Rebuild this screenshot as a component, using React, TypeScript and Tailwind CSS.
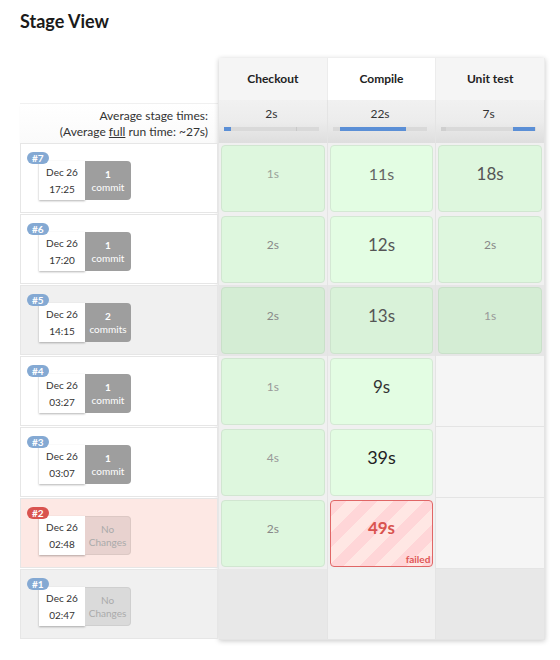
import React from 'react';

interface Stage {
  t: string;
  size: number;
  color: string;
  failed?: boolean;
}

interface Run {
  id: number;
  time: string;
  commits?: string;
  label?: string;
  stages: (Stage | null)[];
  shade?: boolean;
  failed?: boolean;
  empty?: boolean;
}

const runs: Run[] = [
  {
    id: 7, time: '17:25', commits: '1', label: 'commit',
    stages: [
      { t: '1s', size: 12, color: '#9aa39a' },
      { t: '11s', size: 16, color: '#666' },
      { t: '18s', size: 17, color: '#555' },
    ],
  },
  {
    id: 6, time: '17:20', commits: '1', label: 'commit',
    stages: [
      { t: '2s', size: 12, color: '#888' },
      { t: '12s', size: 17, color: '#555' },
      { t: '2s', size: 12, color: '#888' },
    ],
  },
  {
    id: 5, time: '14:15', commits: '2', label: 'commits', shade: true,
    stages: [
      { t: '2s', size: 12, color: '#888' },
      { t: '13s', size: 17, color: '#555' },
      { t: '1s', size: 12, color: '#999' },
    ],
  },
  {
    id: 4, time: '03:27', commits: '1', label: 'commit',
    stages: [
      { t: '1s', size: 12, color: '#999' },
      { t: '9s', size: 17, color: '#333' },
      null,
    ],
  },
  {
    id: 3, time: '03:07', commits: '1', label: 'commit',
    stages: [
      { t: '4s', size: 12, color: '#999' },
      { t: '39s', size: 18, color: '#222' },
      null,
    ],
  },
  {
    id: 2, time: '02:48', failed: true,
    stages: [
      { t: '2s', size: 12, color: '#888' },
      { t: '49s', size: 17, color: '#d9534f', failed: true },
      null,
    ],
  },
  { id: 1, time: '02:47', empty: true, stages: [null, null, null] },
];

const stageNames = ['Checkout', 'Compile', 'Unit test'];
const averages = [
  { t: '2s', offset: 0, width: 7, tick: 72 },
  { t: '22s', offset: 7, width: 66, tick: 0 },
  { t: '7s', offset: 72, width: 22, tick: 5 },
];

const RunCell = ({ run }: { run: Run }) => {
  const rowBg = run.failed ? 'bg-[#fde8e4]' : run.shade || run.empty ? 'bg-[#f0f0f0]' : 'bg-white';
  const badgeBg = run.failed ? 'bg-[#d9534f]' : 'bg-[#84a9d3]';
  return (
    <div className={`relative h-[70px] mb-[1px] border border-[#e6e6e6] ${rowBg}`}>
      <span className={`absolute left-[6px] top-[8px] z-10 rounded-full px-[5px] text-[10px] leading-[12px] font-bold text-white ${badgeBg}`}>
        #{run.id}
      </span>
      <div className="flex pl-[18px] pt-[17px]">
        <div className="flex h-[39px] w-[46px] flex-col items-center justify-center gap-[5px] bg-white text-[10px] leading-[12px] text-[#333] shadow-[0_1px_2px_rgba(0,0,0,0.3)]">
          <span>Dec 26</span>
          <span>{run.time}</span>
        </div>
        {run.commits ? (
          <div className="flex h-[39px] w-[46px] flex-col items-center justify-center rounded-r-[4px] bg-[#9e9e9e] text-[10px] leading-[13px] text-white">
            <span className="font-bold">{run.commits}</span>
            <span>{run.label}</span>
          </div>
        ) : (
          <div
            className={`flex h-[39px] w-[46px] flex-col items-center justify-center rounded-r-[4px] border border-l-0 text-[10px] leading-[13px] text-[#aaa] ${
              run.failed ? 'border-[#dcc8c4] bg-[#e8d2cf]' : 'border-[#cfcfcf] bg-[#dadada]'
            }`}
          >
            <span>No</span>
            <span>Changes</span>
          </div>
        )}
      </div>
    </div>
  );
};

const StageCell = ({ stage, col, run }: { stage: Stage | null; col: number; run: Run }) => {
  const mid = col === 1;
  if (!stage) {
    const bg = run.empty ? (mid ? 'bg-[#f1f1f1]' : 'bg-[#e8e8e8]') : 'bg-[#f5f5f5]';
    return <div className={`h-[71px] border-b border-r border-[#e4e4e4] ${bg}`} />;
  }
  if (stage.failed) {
    return (
      <div className="h-[71px] border-r border-[#e4e4e4] bg-[#f0f0f0] p-[2px]">
        <div className="relative flex h-full items-center justify-center rounded-[4px] border border-[#e06666] bg-[repeating-linear-gradient(135deg,#ffd6d8_0px,#ffd6d8_11px,#ffe7e4_11px,#ffe7e4_22px)] pb-[12px]">
          <span className="font-bold" style={{ fontSize: stage.size, color: stage.color }}>
            {stage.t}
          </span>
          <span className="absolute bottom-[1px] right-[2px] text-[10px] font-bold leading-[12px] text-[#e05555]">failed</span>
        </div>
      </div>
    );
  }
  const box = run.shade
    ? mid
      ? 'bg-[#d9f2d9] border-[#cde3cd]'
      : 'bg-[#d4edd4] border-[#c9e0c9]'
    : mid
      ? 'bg-[#e3fde3] border-[#d4e8d4]'
      : 'bg-[#def7de] border-[#d1e6d1]';
  return (
    <div className={`h-[71px] border-r border-[#e4e4e4] p-[2px] ${run.shade ? 'bg-[#e6e6e6]' : 'bg-[#f0f0f0]'}`}>
      <div className={`flex h-full items-center justify-center rounded-[4px] border pb-[10px] ${box}`}>
        <span style={{ fontSize: stage.size, color: stage.color }}>{stage.t}</span>
      </div>
    </div>
  );
};

export default function App() {
  return (
    <div className="min-h-[660px] bg-white px-5 pt-[9px] font-['Lato',sans-serif] text-[#333]">
      <h2 className="text-[18px] leading-[24px] font-bold text-[#1a1a1a]">Stage View</h2>

      <div className="mt-[25px] flex">
        {/* build column */}
        <div className="w-[199px] shrink-0 pr-[1px]">
          <div className="h-[45px]" />
          <div className="h-[40px] border-t border-[#f0f0f0] bg-linear-to-b from-white to-[#fafafa] pr-[10px] pt-[4px] text-right text-[12px] leading-[16px] shadow-[0_2px_2px_-1px_rgba(0,0,0,0.12)]">
            <div>Average stage times:</div>
            <div>
              (Average <span className="underline">full</span> run time: ~27s)
            </div>
          </div>
          {runs.map(run => (
            <RunCell key={run.id} run={run} />
          ))}
        </div>

        {/* stages panel */}
        <div className="w-[326px] shrink-0 shadow-[0_1px_5px_rgba(0,0,0,0.22)]">
          <div className="grid grid-cols-3">
            {stageNames.map((name, i) => (
              <div
                key={name}
                className={`flex h-[42px] items-center justify-center border-r border-[#ececec] text-[12px] font-bold text-[#222] ${
                  i === 1 ? 'bg-white' : 'bg-[#f5f5f5]'
                }`}
              >
                {name}
              </div>
            ))}
            {averages.map((avg, i) => (
              <div
                key={i}
                className="h-[43px] border-r border-[#e4e4e4] bg-linear-to-b from-[#f1f1f1] via-[#ececec] to-[#dedede] pl-[5px] pr-[8px] pt-[6px]"
              >
                <div className="text-center text-[12px] leading-[16px] text-[#333]">{avg.t}</div>
                <div className="mt-[5px] flex h-[4px] bg-[#d9d9d9]">
                  {avg.tick > 0 && avg.offset === 0 && <div className="w-[7px] bg-[#5b8fd6]" />}
                  {avg.offset > 0 && (
                    <div className="flex" style={{ width: avg.offset }}>
                      {avg.tick > 0 && <div className="bg-[#cfcfcf]" style={{ width: avg.tick }} />}
                    </div>
                  )}
                  {avg.offset > 0 && <div className="bg-[#5b8fd6]" style={{ width: avg.width }} />}
                  {avg.offset === 0 && <div className="bg-[#d9d9d9]" style={{ width: avg.tick - 7 }} />}
                  {avg.offset === 0 && <div className="w-[1px] bg-[#c8c8c8]" />}
                </div>
              </div>
            ))}
          </div>
          {runs.map(run => (
            <div key={run.id} className="grid grid-cols-3">
              {run.stages.map((s, i) => (
                <StageCell key={i} stage={s} col={i} run={run} />
              ))}
            </div>
          ))}
        </div>
      </div>
    </div>
  );
}
